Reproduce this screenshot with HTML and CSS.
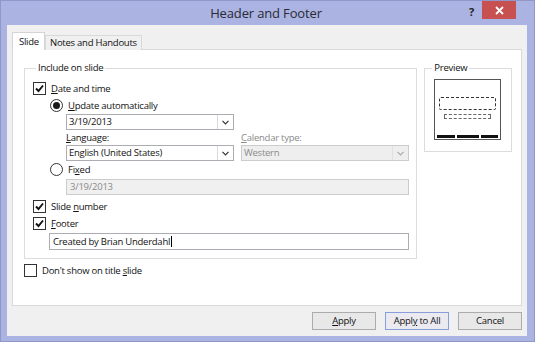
FILE: index.html
```html
<!DOCTYPE html>
<html>
<head>
<meta charset="utf-8">
<link rel="stylesheet" href="styles.css">
</head>
<body>
<div class="window">
  <header class="titlebar">
    <h1 class="title">Header and Footer</h1>
    <div class="controls">
      <span class="help">?</span>
      <span class="close"><svg width="9" height="9" viewBox="0 0 9 9"><path d="M1 1 L8 8 M8 1 L1 8" stroke="#fff" stroke-width="1.8"/></svg></span>
    </div>
  </header>
  <div class="client">
    <div class="tabs">
      <div class="tab active">Slide</div>
      <div class="tab">Notes and Handouts</div>
    </div>
    <div class="panel">
      <div class="groups">
        <fieldset class="group include">
          <legend>Include on slide</legend>
          <div class="row r-date"><span class="check on"><svg width="11" height="11" viewBox="0 0 11 11"><path d="M2 5.5 L4.5 8 L9 2.5" fill="none" stroke="#111" stroke-width="1.9"/></svg></span><span><u>D</u>ate and time</span></div>
          <div class="lvl2">
            <div class="row r-update"><span class="radio on"></span><span><u>U</u>pdate automatically</span></div>
            <div class="lvl3">
              <div class="combo c-date"><span class="val">3/19/2013</span><span class="arrow"><svg width="7" height="5" viewBox="0 0 7 5"><path d="M0.5 0.8 L3.5 3.8 L6.5 0.8" fill="none" stroke="#333" stroke-width="1.2"/></svg></span></div>
              <div class="lang-grid">
                <span class="lbl"><u>L</u>anguage:</span>
                <span class="lbl dis"><u>C</u>alendar type:</span>
                <div class="combo"><span class="val">English (United States)</span><span class="arrow"><svg width="7" height="5" viewBox="0 0 7 5"><path d="M0.5 0.8 L3.5 3.8 L6.5 0.8" fill="none" stroke="#333" stroke-width="1.2"/></svg></span></div>
                <div class="combo disabled"><span class="val">Western</span><span class="arrow"><svg width="7" height="5" viewBox="0 0 7 5"><path d="M0.5 0.8 L3.5 3.8 L6.5 0.8" fill="none" stroke="#aaa" stroke-width="1.2"/></svg></span></div>
              </div>
            </div>
            <div class="row r-fixed"><span class="radio"></span><span>Fi<u>x</u>ed</span></div>
            <div class="lvl3">
              <div class="field disabled f-fixed">3/19/2013</div>
            </div>
          </div>
          <div class="row r-slide"><span class="check on"><svg width="11" height="11" viewBox="0 0 11 11"><path d="M2 5.5 L4.5 8 L9 2.5" fill="none" stroke="#111" stroke-width="1.9"/></svg></span><span>Slide <u>n</u>umber</span></div>
          <div class="row r-footer"><span class="check on"><svg width="11" height="11" viewBox="0 0 11 11"><path d="M2 5.5 L4.5 8 L9 2.5" fill="none" stroke="#111" stroke-width="1.9"/></svg></span><span><u>F</u>ooter</span></div>
          <div class="lvl2b">
            <div class="field f-footer">Created by Brian Underdahl<span class="caret"></span></div>
          </div>
        </fieldset>
        <fieldset class="group preview">
          <legend>Preview</legend>
          <div class="slide">
            <div class="ph-title"></div>
            <div class="ph-sub"></div>
            <div class="ph-bars"><span class="b1"></span><span class="b2"></span><span class="b3"></span></div>
          </div>
        </fieldset>
      </div>
      <div class="row r-dont"><span class="check"></span><span>Don't show on title <u>s</u>lide</span></div>
    </div>
    <div class="buttons">
      <button class="btn"><u>A</u>pply</button>
      <button class="btn default">Appl<u>y</u> to All</button>
      <button class="btn">Cancel</button>
    </div>
  </div>
</div>
</body>
</html>
```

FILE: styles.css
```css
* { box-sizing: border-box; }
html, body { margin: 0; padding: 0; }
body {
  width: 535px;
  height: 342px;
  overflow: hidden;
  font-family: "Open Sans", "Noto Sans", sans-serif;
  font-size: 9.5px;
  letter-spacing: -0.25px;
  color: #111;
  background: #fff;
}
u { text-decoration: underline; text-underline-offset: 1px; }

.window {
  width: 535px;
  height: 342px;
  background: #aab3e1;
  border: 1px solid #8f98c9;
  padding: 0 7px 5px 6px;
  display: flex;
  flex-direction: column;
}

.titlebar {
  height: 24px;
  display: flex;
  align-items: flex-start;
}
.title {
  flex: 1;
  margin: 0;
  padding-left: 56px;
  text-align: center;
  font-weight: normal;
  font-size: 13px;
  letter-spacing: -0.15px;
  line-height: 24px;
  color: #2a2a36;
}
.controls {
  display: flex;
  align-items: flex-start;
  gap: 8px;
  margin-right: 11px;
}
.help {
  font-weight: bold;
  font-size: 11px;
  line-height: 18px;
  color: #222;
  padding-top: 2px;
}
.close {
  width: 34px;
  height: 18px;
  background: #c75050;
  display: flex;
  align-items: center;
  justify-content: center;
}

.client {
  flex: 1;
  background: #f0f0f0;
  padding: 7px 5px 0 5px;
  display: flex;
  flex-direction: column;
}

.tabs {
  display: flex;
  align-items: flex-end;
  height: 18px;
  margin-bottom: -1px;
  position: relative;
  z-index: 1;
}
.tab {
  height: 15px;
  padding: 0 4px;
  border: 1px solid #d9d9d9;
  border-bottom: none;
  background: #f0f0f0;
  line-height: 13px;
}
.tab.active {
  height: 18px;
  width: 33px;
  background: #fff;
  border-color: #d4d4d4;
  line-height: 17px;
  padding: 0 6px;
}

.panel {
  height: 257px;
  background: #fff;
  border: 1px solid #d9d9d9;
  padding: 11px 9px 0 11px;
}

.groups {
  display: flex;
  gap: 7px;
  align-items: flex-start;
}

.group {
  margin: 0;
  border: 1px solid #dcdcdc;
  min-width: 0;
}
.group legend {
  padding: 0 2px;
  margin-left: 3px;
  line-height: 14px;
}
.preview legend { margin-left: -2px; }

.include {
  width: 395px;
  padding: 0 8px 8px 8px;
}
.preview {
  width: 88px;
  height: 91px;
  padding: 4px 9px 0 9px;
}

.row {
  display: flex;
  align-items: center;
  gap: 5px;
  height: 15px;
  line-height: 15px;
}
.r-date { margin-top: 6px; }
.r-update { margin-top: 2px; }
.r-fixed { margin-top: 1px; }
.r-slide { margin-top: 4px; }
.r-footer { margin-top: 2px; }
.r-dont { margin-top: 4px; padding-left: 0; }

.lvl2 { padding-left: 17px; }
.lvl3 { padding-left: 16px; }
.lvl2b { padding-left: 16px; }

.check {
  width: 13px;
  height: 13px;
  border: 1px solid #333;
  background: #fff;
  display: flex;
  align-items: center;
  justify-content: center;
  flex: none;
}
.radio {
  width: 13px;
  height: 13px;
  border: 1px solid #333;
  border-radius: 50%;
  background: #fff;
  display: flex;
  align-items: center;
  justify-content: center;
  flex: none;
}
.radio.on::after {
  content: "";
  width: 7px;
  height: 7px;
  border-radius: 50%;
  background: #1a1a1a;
}

.combo {
  height: 16px;
  width: 168px;
  border: 1px solid #abadb3;
  background: #fff;
  display: flex;
  align-items: stretch;
}
.combo .val {
  flex: 1;
  padding-left: 2px;
  line-height: 14px;
}
.combo .arrow {
  width: 16px;
  border-left: 1px solid #dadada;
  display: flex;
  align-items: center;
  justify-content: center;
}
.combo.disabled {
  background: #eeeeee;
  border-color: #cccccc;
  color: #8a8a8a;
}
.combo.disabled .arrow { border-left-color: #e0e0e0; }
.c-date { margin-top: 1px; }

.lang-grid {
  display: grid;
  grid-template-columns: 168px 168px;
  column-gap: 7px;
  grid-template-rows: 15px 16px;
  margin-top: 0;
}
.lbl { line-height: 15px; }
.lbl.dis { color: #8a8a8a; }

.field {
  height: 16px;
  border: 1px solid #abadb3;
  background: #fff;
  padding-left: 3px;
  line-height: 14px;
  width: 343px;
}
.field.disabled {
  background: #f0f0f0;
  border-color: #cccccc;
  color: #8a8a8a;
}
.f-fixed { margin-top: 2px; }
.f-footer {
  margin-top: 2px;
  height: 17px;
  width: 360px;
  line-height: 15px;
}
.caret {
  display: inline-block;
  width: 1px;
  height: 11px;
  background: #000;
  vertical-align: -2px;
  margin-left: 1px;
}

.slide {
  width: 67px;
  height: 61px;
  border: 1px solid #555;
  background: #fff;
  display: flex;
  flex-direction: column;
  align-items: center;
}
.ph-title {
  width: 57px;
  height: 13px;
  margin-top: 17px;
  border: 1px dashed #333;
  border-radius: 2px;
}
.ph-sub {
  width: 47px;
  height: 5px;
  margin-top: 4px;
  border: 1px dashed #666;
}
.ph-bars {
  margin-top: auto;
  margin-bottom: 1px;
  display: flex;
  gap: 2px;
  width: 61px;
}
.ph-bars span { height: 3px; background: #111; display: block; }
.b1 { width: 18px; }
.b2 { width: 22px; }
.b3 { width: 17px; }

.buttons {
  display: flex;
  justify-content: flex-end;
  gap: 9px;
  margin-top: 6px;
}
.btn {
  width: 64px;
  height: 18px;
  background: #e8e8e8;
  border: 1px solid #acacac;
  font-family: inherit;
  font-size: 9.5px;
  letter-spacing: -0.25px;
  color: #111;
  padding: 0;
  line-height: 16px;
}
.btn.default {
  border-color: #8a9ddb;
  background: #eaeaf0;
}
```
